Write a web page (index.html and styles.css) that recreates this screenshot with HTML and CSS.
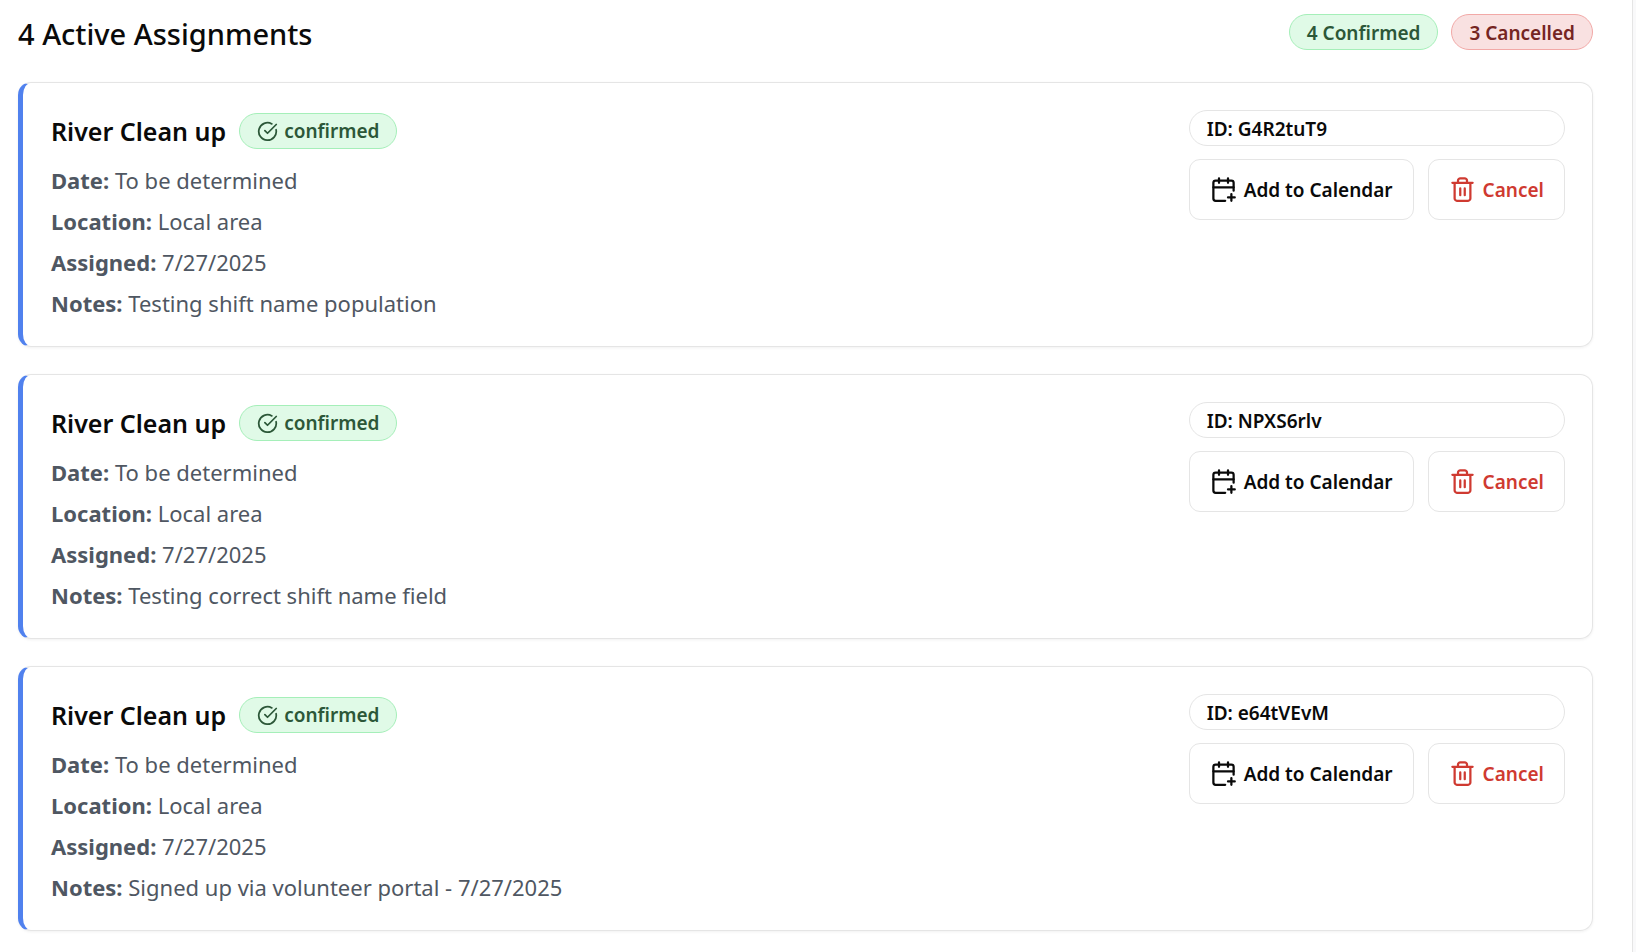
FILE: index.html
```html
<!DOCTYPE html>
<html lang="en">
<head>
<meta charset="utf-8">
<title>Active Assignments</title>
<link rel="stylesheet" href="styles.css">
</head>
<body>
<svg class="sprite" aria-hidden="true">
  <symbol id="check" viewBox="0 0 24 24"><path d="M21.801 10A10 10 0 1 1 17 3.335"/><path d="m9 11 3 3L22 4"/></symbol>
  <symbol id="calendar" viewBox="0 0 24 24"><path d="M8 2v4M16 2v4M3 10h18M16 19h6M19 16v6"/><path d="M21 13V6a2 2 0 0 0-2-2H5a2 2 0 0 0-2 2v14a2 2 0 0 0 2 2h8.500"/></symbol>
  <symbol id="trash" viewBox="0 0 24 24"><path d="M3 6h18M19 6v14c0 1-1 2-2 2H7c-1 0-2-1-2-2V6M8 6V4c0-1 1-2 2-2h4c1 0 2 1 2 2v2M10 11v6M14 11v6"/></symbol>
</svg>
<main class="panel">
  <header class="panel-header">
    <h1 class="panel-title">4 Active Assignments</h1>
    <div class="totals">
      <span class="badge badge-green">4 Confirmed</span>
      <span class="badge badge-red">3 Cancelled</span>
    </div>
  </header>

  <article class="card">
    <div class="info">
      <div class="card-heading">
        <h2 class="card-title">River Clean up</h2>
        <span class="badge badge-green badge-status"><svg class="icon-small"><use href="#check"/></svg>confirmed</span>
      </div>
      <div class="details">
        <p><strong>Date:</strong> To be determined</p>
        <p><strong>Location:</strong> Local area</p>
        <p><strong>Assigned:</strong> 7/27/2025</p>
        <p><strong>Notes:</strong> Testing shift name population</p>
      </div>
    </div>
    <div class="side">
      <span class="badge">ID: G4R2tuT9</span>
      <div class="actions">
        <button class="button" type="button"><svg class="icon"><use href="#calendar"/></svg>Add to Calendar</button>
        <button class="button button-danger" type="button"><svg class="icon"><use href="#trash"/></svg>Cancel</button>
      </div>
    </div>
  </article>

  <article class="card">
    <div class="info">
      <div class="card-heading">
        <h2 class="card-title">River Clean up</h2>
        <span class="badge badge-green badge-status"><svg class="icon-small"><use href="#check"/></svg>confirmed</span>
      </div>
      <div class="details">
        <p><strong>Date:</strong> To be determined</p>
        <p><strong>Location:</strong> Local area</p>
        <p><strong>Assigned:</strong> 7/27/2025</p>
        <p><strong>Notes:</strong> Testing correct shift name field</p>
      </div>
    </div>
    <div class="side">
      <span class="badge">ID: NPXS6rlv</span>
      <div class="actions">
        <button class="button" type="button"><svg class="icon"><use href="#calendar"/></svg>Add to Calendar</button>
        <button class="button button-danger" type="button"><svg class="icon"><use href="#trash"/></svg>Cancel</button>
      </div>
    </div>
  </article>

  <article class="card">
    <div class="info">
      <div class="card-heading">
        <h2 class="card-title">River Clean up</h2>
        <span class="badge badge-green badge-status"><svg class="icon-small"><use href="#check"/></svg>confirmed</span>
      </div>
      <div class="details">
        <p><strong>Date:</strong> To be determined</p>
        <p><strong>Location:</strong> Local area</p>
        <p><strong>Assigned:</strong> 7/27/2025</p>
        <p><strong>Notes:</strong> Signed up via volunteer portal - 7/27/2025</p>
      </div>
    </div>
    <div class="side">
      <span class="badge">ID: e64tVEvM</span>
      <div class="actions">
        <button class="button" type="button"><svg class="icon"><use href="#calendar"/></svg>Add to Calendar</button>
        <button class="button button-danger" type="button"><svg class="icon"><use href="#trash"/></svg>Cancel</button>
      </div>
    </div>
  </article>
</main>
</body>
</html>
```
FILE: styles.css
```css
* { box-sizing: border-box; }
body {
  margin: 0;
  background: #f9f9fa;
  color: #0a0a0a;
  font-family: "Noto Sans", "Open Sans", sans-serif;
}
h1, h2, p { margin: 0; }
.sprite { display: none; }
.panel {
  display: flex;
  flex-direction: column;
  gap: 27px;
  min-height: 100vh;
  margin-right: 3px;
  padding: 12px 39px 20px 18px;
  border-right: 1px solid #e5e5e5;
  background: #fff;
}
.panel-header {
  display: flex;
  justify-content: space-between;
  align-items: flex-start;
  height: 43px;
}
.panel-title { font-size: 29px; font-weight: 500; line-height: 43px; }
.totals { display: flex; gap: 13px; padding-top: 2px; }
.badge {
  display: flex;
  align-items: center;
  height: 36px;
  padding: 1px 17px 0;
  border: 1px solid #e5e5e5;
  border-radius: 18px;
  font-size: 19px;
  font-weight: 600;
  line-height: 28px;
  white-space: nowrap;
}
.badge-green { border-color: #a5efb9; background: #e0fae7; color: #2c5738; }
.badge-red { border-color: #f2a9a7; background: #f9e1e1; color: #752522; }
.badge-status { gap: 6px; }
.card {
  display: flex;
  justify-content: space-between;
  align-items: flex-start;
  padding: 27px 27px 27px 28px;
  border: 1px solid #e5e5e5;
  border-left: 5px solid #5081ee;
  border-radius: 13px;
  box-shadow: 0 1px 3px rgba(0, 0, 0, 0.06);
}
.info { display: flex; flex-direction: column; gap: 13px; }
.card-heading { display: flex; align-items: center; gap: 13px; height: 41px; }
.card-title { font-size: 25px; font-weight: 600; line-height: 40px; }
.details {
  display: flex;
  flex-direction: column;
  gap: 9px;
  color: #4f5762;
  font-size: 22px;
  line-height: 32px;
}
.details strong { font-weight: 700; }
.side { display: flex; flex-direction: column; gap: 13px; }
.actions { display: flex; gap: 14px; }
.button {
  display: flex;
  align-items: center;
  gap: 7px;
  height: 61px;
  padding: 0 20px;
  border: 1px solid #e5e5e5;
  border-radius: 11px;
  background: #fff;
  color: #0a0a0a;
  font: inherit;
  font-size: 19px;
  font-weight: 600;
  white-space: nowrap;
}
.button-danger { color: #cf3a31; }
.icon, .icon-small {
  flex: none;
  fill: none;
  stroke: currentColor;
  stroke-width: 2;
  stroke-linecap: round;
  stroke-linejoin: round;
}
.icon { width: 27px; height: 27px; }
.icon-small { width: 21px; height: 21px; }
```
